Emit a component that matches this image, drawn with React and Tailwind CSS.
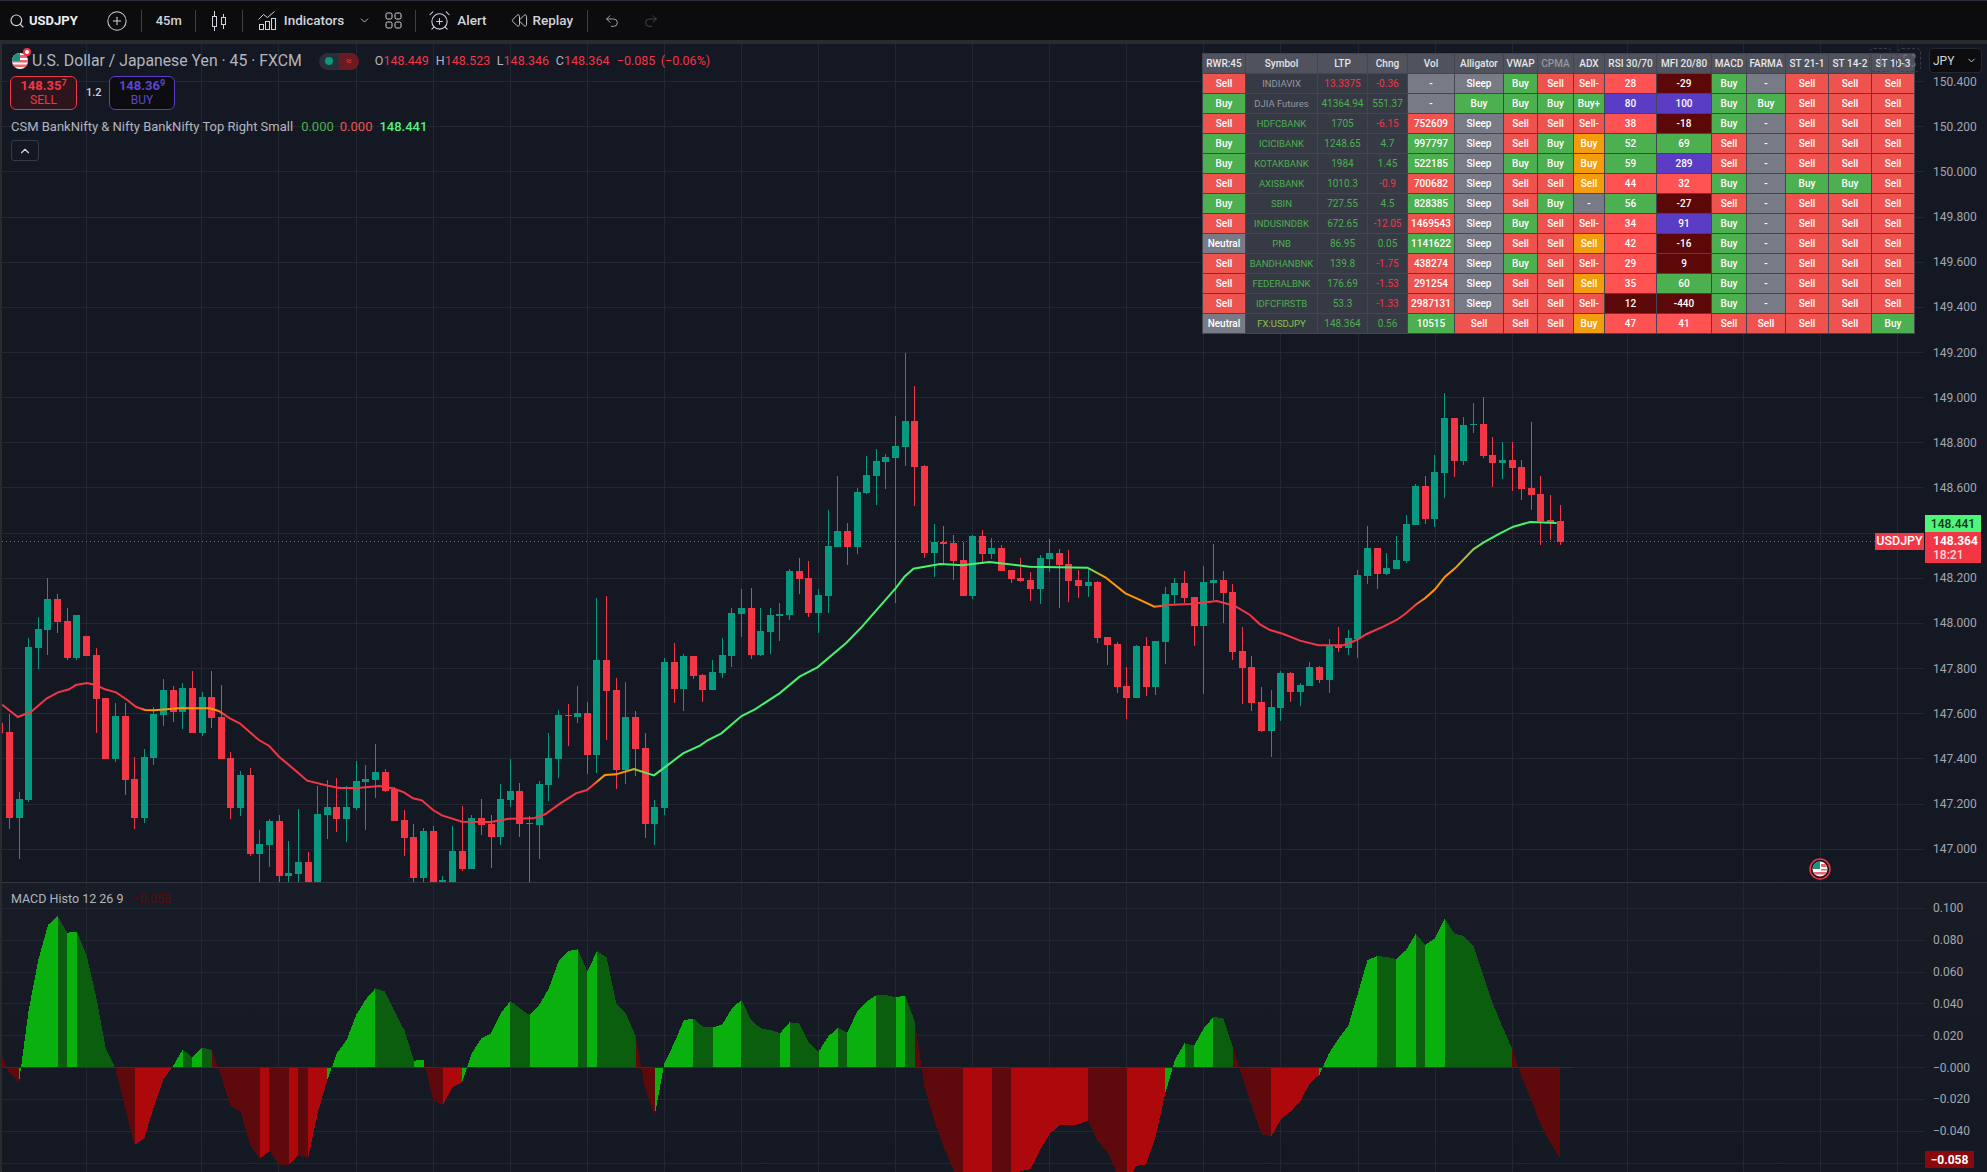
import React from "react";
import {
  Search,
  CirclePlus,
  ChevronDown,
  ChevronUp,
  AlarmClockPlus,
  Rewind,
  Undo2,
  Redo2,
} from "lucide-react";

const GREEN = "#089981";
const RED = "#f23645";
const GRID = "#232732";

// candle spacing on the time axis
const xOf = (i) => -0.2 + 9.632 * i;
const priceY = (p) => 578.3 + (148.2 - p) * 225.8;

// [isGreen, bodyTop, bodyBottom, wickTop, wickBottom], y in 3x px from each base
const toCandles = (base, rows) =>
  rows.map(([g, t, b, h, l]) => ({
    green: !!g,
    top: base + t / 3,
    bottom: base + b / 3,
    high: base + h / 3,
    low: base + l / 3,
  }));

const candles = [
  ...toCandles(560, [
    [0, 490, 520, 490, 520], [0, 516, 773, 462, 806], [1, 717, 773, 697, 896], [1, 261, 720, 235, 725],
    [1, 207, 264, 170, 326], [1, 117, 210, 55, 285], [0, 117, 186, 102, 218], [0, 183, 294, 145, 299],
    [1, 165, 294, 165, 299], [0, 228, 288, 228, 288], [0, 285, 417, 265, 518], [0, 414, 597, 414, 597],
    [1, 468, 597, 430, 605], [0, 468, 660, 430, 705], [0, 657, 774, 592, 806], [1, 591, 774, 568, 788],
    [1, 462, 594, 442, 614], [1, 390, 465, 357, 498], [0, 390, 456, 378, 486], [1, 384, 456, 369, 507],
    [0, 384, 519, 333, 519], [1, 411, 519, 397, 528], [0, 411, 474, 333, 504], [0, 471, 597, 375, 597],
    [0, 594, 744, 576, 777], [1, 645, 744, 633, 768], [0, 645, 882, 624, 888], [1, 852, 882, 810, 965],
    [1, 783, 855, 777, 921], [0, 783, 948, 765, 965], [1, 939, 948, 843, 965], [1, 906, 942, 747, 965],
    [0, 906, 965, 876, 965], [1, 762, 965, 678, 965], [1, 741, 765, 660, 837], [0, 741, 777, 654, 816],
    [1, 741, 777, 678, 846], [1, 663, 744, 603, 750], [1, 657, 666, 615, 810], [1, 636, 660, 552, 714],
    [0, 636, 693, 627, 696], [0, 687, 783, 680, 783], [0, 780, 834, 750, 888], [0, 831, 954, 792, 965],
    [1, 813, 954, 804, 965], [0, 813, 965, 798, 965], [1, 960, 965, 948, 965], [1, 873, 965, 798, 965],
    [0, 873, 927, 738, 933], [1, 774, 927, 765, 927], [0, 774, 795, 717, 825], [0, 792, 831, 765, 924],
    [1, 717, 831, 672, 855], [1, 693, 720, 597, 741], [0, 693, 792, 669, 831], [0, 789, 792, 768, 965],
    [1, 672, 795, 663, 897], [1, 594, 675, 519, 723], [1, 465, 597, 450, 654], [0, 465, 468, 432, 558],
    [1, 459, 471, 378, 489], [0, 459, 585, 426, 642], [1, 300, 585, 114, 639], [0, 300, 393, 108, 540],
    [0, 390, 630, 354, 687], [1, 471, 630, 366, 672], [0, 471, 567, 453, 648], [0, 564, 792, 519, 834],
    [1, 741, 792, 720, 855], [1, 306, 744, 294, 765],
  ]),
  ...toCandles(340, [
    [0, 966, 1047, 909, 1089], [1, 948, 1047, 942, 1113], [0, 948, 1008, 948, 1017], [0, 1005, 1050, 1002, 1086],
    [1, 996, 1050, 960, 1050], [1, 945, 999, 894, 1014], [1, 819, 948, 804, 981], [1, 804, 822, 747, 891],
    [0, 804, 945, 744, 957], [1, 873, 945, 804, 948], [1, 825, 876, 804, 942], [1, 822, 828, 789, 903],
    [1, 693, 825, 687, 840], [0, 693, 717, 654, 762], [0, 714, 819, 663, 831], [1, 765, 819, 747, 879],
    [1, 618, 768, 510, 819], [1, 573, 621, 408, 621], [0, 573, 621, 549, 675], [1, 456, 621, 444, 642],
    [1, 405, 459, 348, 462], [1, 363, 408, 327, 495], [1, 351, 366, 342, 447], [1, 318, 354, 228, 789],
    [1, 243, 321, 39, 378], [0, 243, 381, 138, 498], [0, 378, 639, 375, 654], [1, 606, 639, 552, 711],
    [0, 606, 612, 558, 672], [0, 609, 663, 585, 720], [0, 660, 768, 606, 768], [1, 588, 768, 585, 777],
    [0, 588, 642, 570, 672], [1, 624, 642, 594, 657], [0, 624, 693, 615, 693], [0, 690, 717, 690, 729],
    [0, 714, 723, 654, 726], [0, 720, 747, 696, 783], [1, 654, 747, 645, 792], [1, 639, 657, 597, 696],
    [0, 639, 675, 627, 804], [0, 672, 723, 630, 786], [0, 720, 738, 690, 774], [1, 726, 738, 684, 771],
    [0, 726, 894, 723, 909], [0, 891, 915, 891, 975], [0, 912, 1041, 906, 1059], [0, 1038, 1074, 981, 1137],
    [1, 918, 1074, 915, 1074], [0, 918, 1041, 891, 1068], [1, 903, 1041, 903, 1065], [1, 762, 906, 741, 972],
    [1, 729, 765, 714, 795], [0, 729, 774, 693, 789], [0, 771, 858, 771, 918], [1, 726, 858, 678, 1062],
    [1, 720, 729, 612, 780], [0, 720, 759, 693, 849], [0, 756, 936, 732, 960], [0, 933, 984, 861, 1092],
  ]),
  ...toCandles(370, [
    [0, 891, 999, 858, 1023], [0, 996, 1083, 951, 1086], [1, 1011, 1083, 960, 1161], [1, 909, 1014, 903, 1053],
    [0, 909, 966, 906, 996], [1, 945, 966, 939, 1008], [1, 891, 948, 876, 948], [0, 891, 930, 888, 939],
    [1, 825, 930, 807, 969], [0, 825, 834, 771, 846], [1, 804, 834, 780, 855], [1, 615, 807, 600, 864],
    [1, 534, 618, 468, 642], [0, 534, 612, 534, 657], [1, 594, 612, 549, 615], [1, 570, 597, 498, 597],
    [1, 462, 573, 435, 579], [1, 348, 465, 342, 465], [0, 348, 447, 318, 462], [1, 306, 447, 255, 471],
    [1, 144, 309, 69, 384], [0, 144, 273, 144, 321], [1, 165, 273, 141, 285], [1, 162, 165, 99, 189],
    [0, 162, 258, 81, 264], [0, 255, 279, 201, 351], [1, 270, 279, 216, 327], [0, 270, 294, 216, 363],
    [0, 291, 357, 270, 390], [0, 354, 375, 156, 420], [0, 372, 453, 318, 525], [0, 450, 456, 375, 510],
    [0, 453, 516, 405, 525],
  ]),
];

const emaPoints = [
  ...[[5,434],[40,471],[70,455],[105,415],[130,397],[155,388],[170,375],[195,369],[215,375],[235,388],[260,397],[285,420],[305,441],[325,450],[345,451],[400,445],[470,445],[490,453],[515,475],[537,490],[565,523],[580,540],[603,558],[625,590],[665,635],[688,662],[735,677],[760,684],[800,684],[850,678],[880,685],[905,697],[925,715],[945,721],[970,750],[990,766],[1035,785],[1100,786],[1140,776],[1195,775],[1222,762],[1255,730],[1290,700],[1315,690],[1355,645],[1380,643],[1420,627],[1465,646],[1495,616],[1530,580],[1568,557]]
    .map(([x, y]) => [x / 2.24, 560 + y / 3]),
  ...[[130,1200],[160,1180],[205,1128],[235,1108],[290,1060],[335,1010],[375,982],[440,908],[475,860],[550,745],[570,710],[590,686],[650,672],[700,676],[760,666],[850,680],[980,683],[1020,712],[1065,760],[1090,775],[1130,800],[1160,795],[1210,792],[1270,783],[1310,798]]
    .map(([x, y]) => [650 + x / 2.24, 340 + y / 3]),
  ...[[0,735],[30,763],[60,780],[100,792],[150,812],[205,826],[280,826],[320,810],[350,792],[400,770],[440,750],[465,732],[500,702],[525,685],[555,658],[585,620],[615,595],[670,538],[700,518],[750,490],[790,470],[840,456],[920,459]]
    .map(([x, y]) => [1250 + x / 3, 370 + y / 3]),
];

const emaStops = [
  [0, RED], [140, RED], [146, "#ff9800"], [215, "#ff9800"], [225, RED], [592, RED], [600, "#ff9800"], [625, "#ff9800"],
  [650, "#46f26e"], [1087, "#46f26e"], [1105, "#ff9800"], [1152, "#ff9800"], [1165, RED], [1412, RED], [1425, "#ff9800"],
  [1455, "#ff9800"], [1485, "#46f26e"], [1560, "#46f26e"],
];

// histogram height per bar, 3x px from y=880
const macd = [
  515,580,607,390,240,135,108,158,155,225,350,505,565,680,795,775,680,598,558,508,532,503,510,590,680,695,795,836,813,855,855,825,835,700,600,520,480,405,358,325,335,395,450,542,540,660,675,622,608,520,475,460,400,363,385,405,375,325,245,213,208,275,213,232,370,400,468,625,705,550,490,422,415,440,442,434,385,360,420,445,450,460,427,430,487,515,470,443,458,395,365,345,345,352,347,425,620,720,800,870,920,940,920,880,890,885,873,868,810,762,736,736,733,722,785,815,880,900,858,853,770,640,540,490,497,445,411,414,500,590,680,762,770,718,695,665,610,585,520,475,437,340,240,228,231,237,210,162,195,175,115,160,168,198,285,370,440,505,590,660,735,790,835,
];

const HISTO = { bg: "#0ab00e", dg: "#0a5e0e", br: "#ad090c", dr: "#5e0a0d" };
const bands = [
  [0,2,"dr"],[2,6,"bg"],[6,7,"dg"],[7,8,"bg"],[8,12,"dg"],[12,14,"dr"],[14,18,"br"],[18,19,"bg"],[19,20,"dg"],[20,21,"bg"],[21,22,"dg"],[22,27,"dr"],[27,28,"br"],[28,30,"dr"],[30,31,"br"],[31,32,"dr"],[32,34,"br"],[34,39,"bg"],[39,43,"dg"],[43,44,"bg"],[44,46,"dr"],[46,48,"br"],[48,53,"bg"],[53,55,"dg"],[55,60,"bg"],[60,61,"dg"],[61,62,"bg"],[62,66,"dg"],[66,68,"dr"],[68,72,"bg"],[72,74,"dg"],[74,77,"bg"],[77,81,"dg"],[81,82,"bg"],[82,85,"dg"],[85,87,"bg"],[87,88,"dg"],[88,91,"bg"],[91,93,"dg"],[93,94,"bg"],[94,95,"dg"],[95,100,"dr"],[100,103,"br"],[103,105,"dr"],[105,113,"br"],[113,117,"dr"],[117,121,"br"],[121,123,"bg"],[123,124,"dg"],[124,126,"bg"],[126,128,"dg"],[128,132,"dr"],[132,137,"br"],[137,143,"bg"],[143,145,"dg"],[145,147,"bg"],[147,148,"dg"],[148,150,"bg"],[150,157,"dg"],[157,162,"dr"],
];

const verticals = [86,201,278.6,356,433,510,587.5,664,741.5,818,895.5,972,1049.5,1126,1203.6,1280,1358,1435,1512,1627,1743,1820,1897];
const priceTicks = ["150.400","150.200","150.000","149.800","149.600","149.400","149.200","149.000","148.800","148.600","148.400","148.200","148.000","147.800","147.600","147.400","147.200","147.000"];
const macdTicks = [
  ["0.100", 908], ["0.080", 940], ["0.060", 972], ["0.040", 1003.5], ["0.020", 1035.5],
  ["−0.000", 1067.5], ["−0.020", 1099], ["−0.040", 1131],
];

const CELL = {
  sell: "bg-[#ef5350] text-white",
  buy: "bg-[#4caf50] text-white",
  gray: "bg-[#787b86] text-white",
  orange: "bg-[#f39c0e] text-white",
  red: "bg-[#ff5252] text-white",
  dark: "bg-[#5c0708] text-white",
  purple: "bg-[#5b3cc4] text-white",
};

const s = (text) => [text, "sell"];
const b = (text) => [text, "buy"];
const SELL3 = [s("Sell"), s("Sell"), s("Sell")];
const dash = ["-", "gray"];
const sleep = ["Sleep", "gray"];

const headers = ["RWR:45","Symbol","LTP","Chng","Vol","Alligator","VWAP","CPMA","ADX","RSI 30/70","MFI 20/80","MACD","FARMA","ST 21-1","ST 14-2","ST 10-3"];

const rows = [
  { rwr: s("Sell"), sym: "INDIAVIX", symClass: "text-[#9598a1]", ltp: "13.3375", chg: "-0.36", up: false, ltpRed: true,
    rest: [dash, sleep, b("Buy"), s("Sell"), s("Sell-"), ["28","red"], ["-29","dark"], b("Buy"), dash, ...SELL3] },
  { rwr: b("Buy"), sym: "DJIA Futures", symClass: "text-[#9598a1]", ltp: "41364.94", chg: "551.37", up: true,
    rest: [dash, b("Buy"), b("Buy"), b("Buy"), b("Buy+"), ["80","purple"], ["100","purple"], b("Buy"), b("Buy"), ...SELL3] },
  { rwr: s("Sell"), sym: "HDFCBANK", ltp: "1705", chg: "-6.15", up: false,
    rest: [s("752609"), sleep, s("Sell"), s("Sell"), s("Sell-"), ["38","red"], ["-18","dark"], b("Buy"), dash, ...SELL3] },
  { rwr: b("Buy"), sym: "ICICIBANK", ltp: "1248.65", chg: "4.7", up: true,
    rest: [b("997797"), sleep, s("Sell"), b("Buy"), ["Buy","orange"], ["52","buy"], ["69","buy"], s("Sell"), dash, ...SELL3] },
  { rwr: b("Buy"), sym: "KOTAKBANK", ltp: "1984", chg: "1.45", up: true,
    rest: [b("522185"), sleep, b("Buy"), b("Buy"), ["Buy","orange"], ["59","buy"], ["289","purple"], s("Sell"), dash, ...SELL3] },
  { rwr: s("Sell"), sym: "AXISBANK", ltp: "1010.3", chg: "-0.9", up: false,
    rest: [s("700682"), sleep, s("Sell"), s("Sell"), ["Sell","orange"], ["44","red"], ["32","red"], b("Buy"), dash, b("Buy"), b("Buy"), s("Sell")] },
  { rwr: b("Buy"), sym: "SBIN", ltp: "727.55", chg: "4.5", up: true,
    rest: [b("828385"), sleep, s("Sell"), b("Buy"), dash, ["56","buy"], ["-27","dark"], s("Sell"), dash, ...SELL3] },
  { rwr: s("Sell"), sym: "INDUSINDBK", ltp: "672.65", chg: "-12.05", up: false,
    rest: [s("1469543"), sleep, b("Buy"), s("Sell"), s("Sell-"), ["34","red"], ["91","purple"], b("Buy"), dash, ...SELL3] },
  { rwr: ["Neutral","gray"], sym: "PNB", ltp: "86.95", chg: "0.05", up: true,
    rest: [b("1141622"), sleep, s("Sell"), s("Sell"), ["Sell","orange"], ["42","red"], ["-16","dark"], b("Buy"), dash, ...SELL3] },
  { rwr: s("Sell"), sym: "BANDHANBNK", ltp: "139.8", chg: "-1.75", up: false,
    rest: [s("438274"), sleep, b("Buy"), s("Sell"), s("Sell-"), ["29","red"], ["9","dark"], b("Buy"), dash, ...SELL3] },
  { rwr: s("Sell"), sym: "FEDERALBNK", ltp: "176.69", chg: "-1.53", up: false,
    rest: [s("291254"), sleep, s("Sell"), s("Sell"), ["Sell","orange"], ["35","red"], ["60","buy"], b("Buy"), dash, ...SELL3] },
  { rwr: s("Sell"), sym: "IDFCFIRSTB", ltp: "53.3", chg: "-1.33", up: false,
    rest: [s("2987131"), sleep, s("Sell"), s("Sell"), s("Sell-"), ["12","dark"], ["-440","dark"], b("Buy"), dash, ...SELL3] },
  { rwr: ["Neutral","gray"], sym: "FX:USDJPY", symClass: "text-[#8bc34a]", ltp: "148.364", chg: "0.56", up: true,
    rest: [b("10515"), s("Sell"), s("Sell"), s("Sell"), ["Buy","orange"], ["47","red"], ["41","red"], s("Sell"), s("Sell"), s("Sell"), s("Sell"), b("Buy")] },
];

function Cell({ text, kind }) {
  return <div className={`h-[19px] text-center leading-[19px] font-medium ${CELL[kind]}`}>{text}</div>;
}

function SignalTable() {
  return (
    <div className="absolute left-[1200px] top-[9px] grid grid-cols-[42px_71px_49px_39px_46px_48px_33px_35px_30px_51px_54px_34px_38px_42px_42px_42px] gap-px bg-[#434651] p-px text-[10px]">
      {headers.map((h) => (
        <div
          key={h}
          className={`h-[19px] bg-[#50535e] text-center leading-[19px] font-medium ${h === "CPMA" ? "text-[#9598a1]" : "text-[#e6e7ea]"}`}
        >
          {h}
        </div>
      ))}
      {rows.map((row) => (
        <React.Fragment key={row.sym}>
          <Cell text={row.rwr[0]} kind={row.rwr[1]} />
          <div className={`h-[19px] bg-[#363a45] text-center text-[9.5px] leading-[19px] ${row.symClass || "text-[#4caf50]"}`}>{row.sym}</div>
          <div className={`h-[19px] bg-[#363a45] text-center leading-[19px] ${row.ltpRed ? "text-[#f23645]" : "text-[#4caf50]"}`}>{row.ltp}</div>
          <div className={`h-[19px] bg-[#363a45] text-center leading-[19px] ${row.up ? "text-[#4caf50]" : "text-[#f23645]"}`}>{row.chg}</div>
          {row.rest.map(([text, kind], i) => (
            <Cell key={i} text={text} kind={kind} />
          ))}
        </React.Fragment>
      ))}
    </div>
  );
}

function Flag({ size = 20 }) {
  return (
    <svg width={size} height={size} viewBox="0 0 20 20">
      <defs>
        <clipPath id={`flag${size}`}>
          <circle cx="10" cy="10" r="8" />
        </clipPath>
      </defs>
      <g clipPath={`url(#flag${size})`}>
        <rect width="20" height="20" fill="#fff" />
        <rect y="4" width="20" height="3" fill="#f0636a" />
        <rect y="9" width="20" height="2.5" fill="#f0636a" />
        <rect y="13.5" width="20" height="2.5" fill="#f0636a" />
        <rect width="10" height="10" fill="#1f8f82" />
      </g>
    </svg>
  );
}

function ChartIcon() {
  return (
    <svg width="16" height="22" viewBox="0 0 16 22" fill="none" stroke="#d1d4dc" strokeWidth="1">
      <path d="M3.5 1v20M12.5 4v15" />
      <rect x="1.5" y="6.5" width="4" height="10" fill="#0c0c0f" />
      <rect x="10.5" y="7.5" width="4" height="7" fill="#0c0c0f" />
    </svg>
  );
}

function IndicatorsIcon() {
  return (
    <svg width="19" height="19" viewBox="0 0 19 19" fill="none" stroke="#d1d4dc" strokeWidth="1">
      <path d="M.5 8.5l5-5 4 3 7-6" />
      <rect x="1.5" y="13.5" width="4" height="5" />
      <rect x="7.5" y="10.5" width="4" height="8" />
      <rect x="13.5" y="7.5" width="4" height="11" />
    </svg>
  );
}

function LayoutsIcon() {
  return (
    <svg width="17" height="17" viewBox="0 0 17 17" fill="none" stroke="#d1d4dc" strokeWidth="1">
      <rect x="1" y="1" width="6" height="6" rx="1.5" />
      <rect x="10" y="1" width="6" height="6" rx="1.5" />
      <rect x="1" y="10" width="6" height="6" rx="1.5" />
      <rect x="10" y="10" width="6" height="6" rx="1.5" />
    </svg>
  );
}

function Divider({ className }) {
  return <div className={`h-[22px] w-px bg-[#3d3f45] ${className}`} />;
}

function Toolbar() {
  return (
    <div className="flex h-[39px] items-center bg-[#0c0c0f] pl-[9px] text-[13.5px] text-[#d1d4dc]">
      <Search size={16} strokeWidth={1.75} />
      <span className="ml-[4px] text-[13px] font-bold text-[#eceef2]">USDJPY</span>
      <CirclePlus size={22} strokeWidth={1.1} className="ml-[28px]" />
      <Divider className="ml-[13px]" />
      <span className="ml-[14px] text-[13px] font-medium">45m</span>
      <Divider className="ml-[13px]" />
      <span className="ml-[15px] flex"><ChartIcon /></span>
      <Divider className="ml-[15px]" />
      <span className="ml-[15px] flex"><IndicatorsIcon /></span>
      <span className="ml-[7px] font-medium">Indicators</span>
      <ChevronDown size={13} strokeWidth={1.5} className="ml-[14px]" />
      <span className="ml-[14px] flex"><LayoutsIcon /></span>
      <Divider className="ml-[13px]" />
      <AlarmClockPlus size={23} strokeWidth={1.1} className="ml-[12px]" />
      <span className="ml-[6px] font-medium">Alert</span>
      <Rewind size={17} strokeWidth={1.3} className="ml-[24px]" />
      <span className="ml-[5px] font-medium">Replay</span>
      <Divider className="ml-[14px]" />
      <Undo2 size={16} strokeWidth={1.3} className="ml-[16px] text-[#b2b5be]" />
      <Redo2 size={16} strokeWidth={1.3} className="ml-[23px] text-[#4a4c53]" />
    </div>
  );
}

function Legend() {
  return (
    <div className="absolute left-[9px] top-[7px] flex flex-col text-[#b2b5be]">
      <div className="flex h-[20px] items-center">
        <span className="relative -ml-px flex w-[22px]">
          <Flag />
          <span className="absolute right-[1px] top-[-3px] h-[8px] w-[8px] rounded-full border-2 border-[#f23645] bg-white" />
        </span>
        <span className="text-[15.8px]">U.S. Dollar / Japanese Yen · 45 · FXCM</span>
        <div className="ml-[17px] flex h-[17px] w-[40px] overflow-hidden rounded-full bg-[#2a2e39]">
          <span className="flex w-[20px] items-center justify-center">
            <span className="h-[8px] w-[8px] rounded-full bg-[#089981]" />
          </span>
          <span className="flex w-[20px] items-center justify-center bg-[#6b1a22] text-[10px] leading-none text-[#f23645]">≈</span>
        </div>
        <div className="ml-[16px] flex text-[12.5px]">
          <span className="w-[61px]">O<span className="text-[#f23645]">148.449</span></span>
          <span className="w-[61px]">H<span className="text-[#f23645]">148.523</span></span>
          <span className="w-[59px]">L<span className="text-[#f23645]">148.346</span></span>
          <span className="w-[61px]">C<span className="text-[#f23645]">148.364</span></span>
          <span className="w-[44px] text-[#f23645]">−0.085</span>
          <span className="text-[#f23645]">(−0.06%)</span>
        </div>
      </div>
      <div className="mt-[5px] -ml-px flex h-[34px] items-center">
        <div className="flex h-full w-[67px] flex-col items-center justify-center rounded-[6px] border border-[#f23645] bg-[#2e141c] text-[#f23645] leading-[14px]">
          <span className="text-[13px] font-bold">148.35<sup className="text-[9px]">7</sup></span>
          <span className="text-[12px]">SELL</span>
        </div>
        <span className="ml-[9px] w-[22px] text-[11px] font-medium text-[#d1d4dc]">1.2</span>
        <div className="ml-[1px] flex h-full w-[66px] flex-col items-center justify-center rounded-[6px] border border-[#5b3cc4] bg-[#0d0d11] text-[#5b46d0] leading-[14px]">
          <span className="text-[13px] font-bold">148.36<sup className="text-[9px]">9</sup></span>
          <span className="text-[12px]">BUY</span>
        </div>
      </div>
      <div className="mt-[7px] flex h-[20px] items-center text-[13px]">
        <span>CSM BankNifty &amp; Nifty BankNifty Top Right Small</span>
        <span className="ml-[8px] text-[#4caf50]">0.000</span>
        <span className="ml-[6px] text-[#ef5350]">0.000</span>
        <span className="ml-[7px] font-medium text-[#4ef579]">148.441</span>
      </div>
      <div className="mt-[3px] flex h-[21px] w-[28px] items-center justify-center rounded-[3px] border border-[#363a45] text-[#d1d4dc]">
        <ChevronUp size={14} strokeWidth={2} />
      </div>
    </div>
  );
}

function PriceChart() {
  return (
    <svg className="block h-full w-full" viewBox="2 44 1922 838">
      <defs>
        <linearGradient id="ema" gradientUnits="userSpaceOnUse" x1="0" y1="0" x2="1924" y2="0">
          {emaStops.map(([x, color]) => (
            <stop key={x} offset={x / 1924} stopColor={color} />
          ))}
        </linearGradient>
      </defs>
      <g stroke={GRID} strokeWidth="1" shapeRendering="crispEdges">
        {priceTicks.map((t) => (
          <line key={t} x1="2" x2="1924" y1={priceY(Number(t))} y2={priceY(Number(t))} />
        ))}
        {verticals.map((x) => (
          <line key={x} x1={x} x2={x} y1="44" y2="882" />
        ))}
      </g>
      <line x1="2" x2="1875" y1="541.5" y2="541.5" stroke={RED} strokeDasharray="1 3" />
      <g shapeRendering="crispEdges">
        {candles.map((c, i) => {
          const x = xOf(i);
          const color = c.green ? GREEN : RED;
          return (
            <g key={i} fill={color}>
              <rect x={x - 0.5} y={c.high} width="1" height={c.low - c.high} />
              <rect x={x - 3.5} y={c.top} width="7" height={Math.max(c.bottom - c.top, 1)} />
            </g>
          );
        })}
      </g>
      <polyline
        points={emaPoints.map((p) => p.join(",")).join(" ")}
        fill="none"
        stroke="url(#ema)"
        strokeWidth="2"
      />
      {/* news marker */}
      <circle cx="1820" cy="869" r="10" fill="#131722" stroke={RED} strokeWidth="1.5" />
      <g>
        <circle cx="1820" cy="869" r="7.5" fill="#fff" />
        <path d="M1813.5 872h13l-1.5 2.5h-10zM1821 864h4.5l1.5 3h-6zM1821 869h6v1.5h-6z" fill="#f0636a" />
        <path d="M1820 861.5a7.5 7.5 0 0 0-7 5v2.5h7z" fill="#1f8f82" />
      </g>
    </svg>
  );
}

function MacdChart() {
  const zero = 1067.5;
  const toY = (v) => 880 + v / 3;
  return (
    <svg className="block h-full w-full" viewBox="2 883 1922 289">
      <g stroke={GRID} strokeWidth="1" shapeRendering="crispEdges">
        {macdTicks.map(([t, y]) => (
          <line key={t} x1="2" x2="1924" y1={y} y2={y} />
        ))}
        <line x1="2" x2="1924" y1="1163" y2="1163" />
        {verticals.map((x) => (
          <line key={x} x1={x} x2={x} y1="883" y2="1172" />
        ))}
      </g>
      <g shapeRendering="crispEdges">
        {bands.map(([from, to, kind]) => {
          const pts = [`${xOf(from)},${zero}`];
          for (let i = from; i <= to; i++) pts.push(`${xOf(i)},${toY(macd[i])}`);
          pts.push(`${xOf(to)},${zero}`);
          return <polygon key={from} points={pts.join(" ")} fill={HISTO[kind]} />;
        })}
      </g>
      <line x1="2" x2="1571" y1={zero} y2={zero} stroke="#1f3a25" strokeWidth="1" shapeRendering="crispEdges" />
    </svg>
  );
}

function AxisTick({ top, label }) {
  return (
    <span className="absolute left-[9px] text-[12px] leading-[16px] text-[#a3a6af]" style={{ top }}>
      {label}
    </span>
  );
}

export default function App() {
  return (
    <div className="flex h-[1172px] w-[1987px] flex-col overflow-hidden bg-[#131722] font-[Roboto,sans-serif]">
      <div className="h-px bg-[#2a2e39]" />
      <Toolbar />
      <div className="h-[4px] bg-[#2a2b2f]" />
      <div className="flex min-h-0 flex-1 flex-col border-l-2 border-[#2a2b2f]">
        {/* price pane */}
        <div className="flex h-[838px]">
          <div className="relative w-[1922px] overflow-hidden bg-[#141823]">
            <PriceChart />
            <Legend />
            <SignalTable />
            <div className="absolute left-[1867px] top-[4px] flex gap-[5px]">
              <div className="flex h-[24px] w-[23px] items-center justify-center rounded-[5px] border border-dashed border-[#3a3e4a]">
                <svg width="13" height="13" viewBox="0 0 13 13" stroke="#787b86" fill="none">
                  <path d="M6.5 1v11M2 8l4.5 4 4.5-4" />
                </svg>
              </div>
              <div className="flex h-[24px] w-[24px] items-center justify-center rounded-[5px] border border-dashed border-[#3a3e4a]">
                <svg width="13" height="13" viewBox="0 0 13 13" stroke="#787b86" fill="none">
                  <path d="M1 4V1h3M9 1h3v3M12 9v3H9M4 12H1V9" />
                </svg>
              </div>
            </div>
            <div className="absolute left-[1873px] top-[489px] flex h-[17px] w-[49px] items-center justify-center bg-[#f23645] text-[12.5px] font-medium text-white">
              USDJPY
            </div>
          </div>
          <div className="relative flex-1 bg-[#141823]">
            {priceTicks.filter((t) => t !== "148.400").map((t) => (
              <AxisTick key={t} label={t} top={priceY(Number(t)) - 44 - 8} />
            ))}
            <div className="absolute left-[5px] top-[4px] flex h-[25px] w-[53px] items-center justify-between rounded-[4px] border border-[#26282f] bg-[#0d0d10] pl-[3px] pr-[4px] text-[12px] text-[#d1d4dc]">
              <span>JPY</span>
              <ChevronDown size={11} strokeWidth={2} />
            </div>
            <div className="absolute left-[1px] top-[471px] flex h-[17px] w-[56px] items-center justify-center bg-[#4ef579] text-[12px] font-medium text-[#12331c]">
              148.441
            </div>
            <div className="absolute left-[1px] top-[488px] flex h-[31px] w-[56px] flex-col justify-center bg-[#f23645] pl-[8px] text-[12px] leading-[14px] font-bold text-white">
              <span>148.364</span>
              <span className="font-medium text-[#fbd5d8]">18:21</span>
            </div>
          </div>
        </div>
        <div className="h-px bg-[#33363f]" />
        {/* macd pane */}
        <div className="flex min-h-0 flex-1">
          <div className="relative w-[1922px] overflow-hidden bg-gradient-to-b from-[#181c27] to-[#141823]">
            <MacdChart />
            <div className="absolute left-[9px] top-[7px] flex h-[18px] items-center text-[12.5px] text-[#b2b5be]">
              <span>MACD Histo 12 26 9</span>
              <span className="ml-[9px] text-[#5e0a0d]">−0.058</span>
            </div>
          </div>
          <div className="relative flex-1 bg-gradient-to-b from-[#181c27] to-[#141823]">
            {macdTicks.map(([t, y]) => (
              <AxisTick key={t} label={t} top={y - 883 - 8} />
            ))}
            <div className="absolute left-[1px] top-[268px] flex h-[17px] w-[49px] items-center justify-center bg-[#8b090c] text-[12px] font-bold text-white">
              −0.058
            </div>
          </div>
        </div>
      </div>
    </div>
  );
}
